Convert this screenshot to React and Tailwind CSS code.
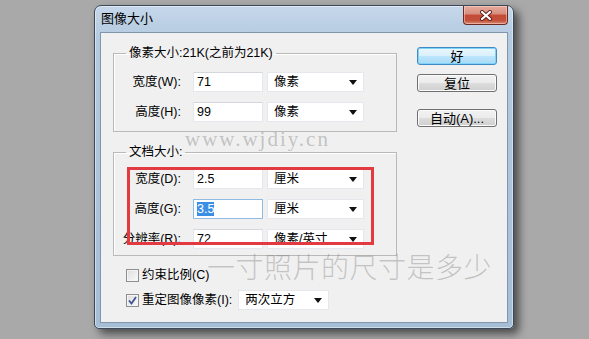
function Arrow() {
  return (
    <svg width="8" height="5" viewBox="0 0 8 5" className="shrink-0">
      <path d="M0 0h8L4 5z" fill="#111" />
    </svg>
  )
}

function TextBox({ value, focused }) {
  return (
    <div
      className={
        focused
          ? 'w-[70px] h-[20px] bg-white border border-[#8fbbe4] flex items-center pl-[3px]'
          : 'w-[70px] h-[20px] bg-white border border-[#e4e7eb] border-t-[#d4d7dc] flex items-center pl-[3px]'
      }
    >
      {focused ? (
        <span className="bg-[#3a8ee6] text-white leading-[14px]">{value}</span>
      ) : (
        <span>{value}</span>
      )}
    </div>
  )
}

function Select({ value, width = 'w-[97px]' }) {
  return (
    <div className={`${width} h-[20px] bg-white border border-[#e4e7eb] flex items-center justify-between pl-[6px] pr-[6px]`}>
      <span>{value}</span>
      <Arrow />
    </div>
  )
}

function Row({ label, value, unit, focused }) {
  return (
    <div className="flex items-center h-[20px]">
      <div className="w-[67px] text-right whitespace-nowrap">{label}</div>
      <div className="ml-[12px]">
        <TextBox value={value} focused={focused} />
      </div>
      <div className="ml-[4px]">
        <Select value={unit} />
      </div>
    </div>
  )
}

function Group({ title, children, className }) {
  return (
    <fieldset className={`border border-[#b9b9b9] shadow-[inset_1px_1px_0_#fff] ${className}`}>
      <legend className="ml-[12px] px-[3px] leading-[16px]">{title}</legend>
      {children}
    </fieldset>
  )
}

function Checkbox({ checked }) {
  return (
    <div className="w-[13px] h-[13px] border border-[#8e8f8f] bg-[linear-gradient(135deg,#dcdcdc,#fbfbfb)] shadow-[inset_0_0_0_1px_#f4f4f4] flex items-center justify-center shrink-0">
      {checked && (
        <svg width="9" height="9" viewBox="0 0 9 9">
          <path d="M1 4.5 L3.5 7.5 L8 1" fill="none" stroke="#3d5593" strokeWidth="1.8" />
        </svg>
      )}
    </div>
  )
}

function Button({ children, primary }) {
  return (
    <div
      className={
        primary
          ? 'w-[80px] h-[18px] rounded-[3px] border border-[#3f8cc4] bg-[linear-gradient(#eaf6fd_0%,#d9f0fc_49%,#bee6fd_50%,#a7d9f5_100%)] shadow-[inset_0_0_0_1px_#7fd3f7] flex items-center justify-center leading-none text-[13px]'
          : 'w-[80px] h-[18px] rounded-[3px] border border-[#707070] bg-[linear-gradient(#f2f2f2_0%,#ebebeb_49%,#dddddd_50%,#cfcfcf_100%)] shadow-[inset_0_0_0_1px_#fbfbfb] flex items-center justify-center leading-none text-[13px]'
      }
    >
      {children}
    </div>
  )
}

export default function App() {
  return (
    <div className="relative w-[589px] h-[339px] overflow-hidden bg-[#a9a9a9] pl-[94px] pt-[5px] text-[12.5px] text-black font-['Liberation_Sans','Noto_Sans_CJK_SC',sans-serif]">
      <div className="w-[420px] h-[324px] rounded-t-[7px] rounded-b-[5px] border border-[#3b4a5a] bg-[linear-gradient(180deg,#c6d7ea_0%,#b4cae0_10%,#a6bdd6_100%)] shadow-[5px_5px_8px_rgba(0,0,0,0.55),inset_0_0_0_1px_rgba(255,255,255,0.45)] flex flex-col px-[5px] pb-[5px]">
        <div className="h-[26px] flex items-start justify-between">
          <div className="pl-[1px] pt-[5px] text-[13px] leading-[16px]">图像大小</div>
          <div className="w-[45px] h-[19px] rounded-b-[4px] border border-t-0 border-[#6a2b22] bg-[linear-gradient(#e8ab9d_0%,#d68d7e_45%,#c54a35_50%,#c2503b_80%,#dc8a6f_100%)] shadow-[inset_0_0_0_1px_rgba(255,220,210,0.5)] flex items-center justify-center">
            <svg width="14" height="11" viewBox="0 0 14 11">
              <path d="M3 2 L11 9 M11 2 L3 9" stroke="#5a2019" strokeWidth="4" strokeLinecap="round" />
              <path d="M3 2 L11 9 M11 2 L3 9" stroke="#fff" strokeWidth="2.2" strokeLinecap="round" />
            </svg>
          </div>
        </div>

        <div className="flex-1 bg-[#f0f0f0] border border-[#7f96ad] flex">
          <div className="ml-[12px] w-[284px] flex flex-col">
            <Group title="像素大小:21K(之前为21K)" className="mt-[12px] pt-[11px] pb-[9px]">
              <div className="flex flex-col gap-[10px]">
                <Row label="宽度(W):" value="71" unit="像素" />
                <Row label="高度(H):" value="99" unit="像素" />
              </div>
            </Group>

            <Group title="文档大小:" className="mt-[12px] pt-[9px] pb-[6px]">
              <div className="flex flex-col gap-[10px]">
                <Row label="宽度(D):" value="2.5" unit="厘米" />
                <Row label="高度(G):" value="3.5" unit="厘米" focused />
                <Row label="分辨率(R):" value="72" unit="像素/英寸" />
              </div>
            </Group>

            <div className="mt-[9px] pl-[13px] flex items-center h-[20px] gap-[3px]">
              <Checkbox />
              <span>约束比例(C)</span>
            </div>
            <div className="mt-[5px] pl-[13px] flex items-center h-[20px] gap-[3px]">
              <Checkbox checked />
              <span className="whitespace-nowrap">重定图像像素(I):</span>
              <div className="ml-[3px]">
                <Select value="两次立方" width="w-[91px]" />
              </div>
            </div>
          </div>

          <div className="ml-[20px] mt-[14px] flex flex-col">
            <Button primary>好</Button>
            <div className="mt-[9px]">
              <Button>复位</Button>
            </div>
            <div className="mt-[17px]">
              <Button>自动(A)...</Button>
            </div>
          </div>
        </div>
      </div>

      <div className="absolute left-[185px] top-[127px] text-[21px] leading-[24px] tracking-[2px] text-[rgba(120,120,120,0.4)] font-['Liberation_Serif',serif] pointer-events-none">
        www.wjdiy.cn
      </div>
      <div className="absolute left-[127px] top-[167px] w-[247px] h-[78px] border-[3px] border-[#e23a40] pointer-events-none" />
      <div className="absolute left-[207px] top-[252px] text-[28px] leading-none tracking-[0.5px] text-[rgba(120,120,120,0.38)] font-['Noto_Sans_CJK_SC',sans-serif] font-light pointer-events-none">
        一寸照片的尺寸是多少
      </div>
    </div>
  )
}
